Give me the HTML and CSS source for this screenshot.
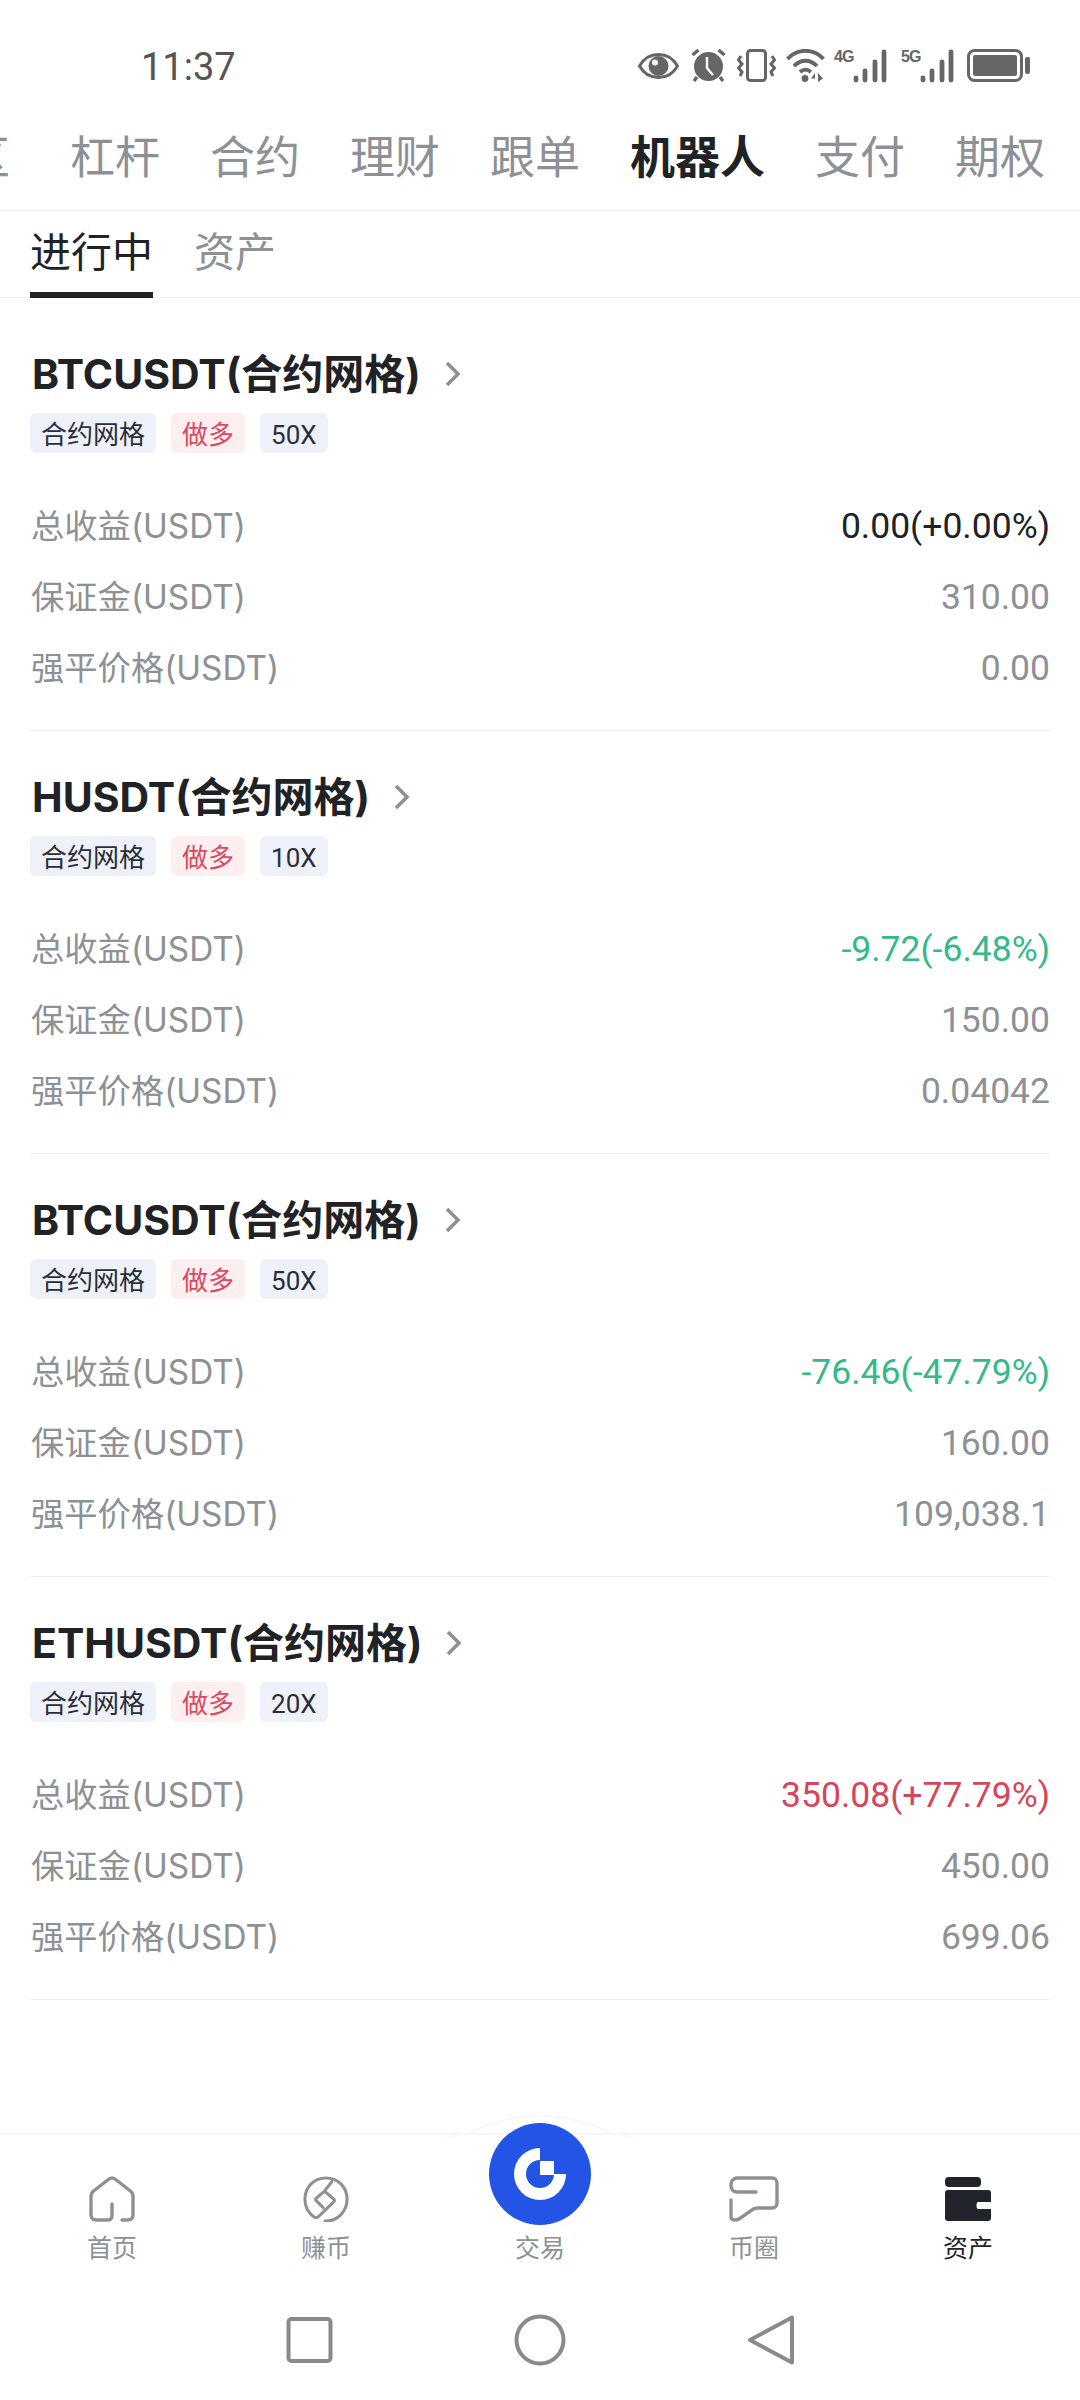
FILE: index.html
```html
<!DOCTYPE html>
<html lang="zh-CN">
<head>
    <meta charset="UTF-8">
    <meta name="viewport" content="width=device-width, initial-scale=1.0">
    <title>机器人</title>
    <link rel="stylesheet" href="styles.css">
</head>
<body>
    <svg class="defs" width="0" height="0">
        <symbol id="chevron" viewBox="0 0 18 28">
            <path d="M3 3l11 11L3 25" fill="none" stroke="#8d9196" stroke-width="3.6"/>
        </symbol>
        <symbol id="bars" viewBox="0 0 34 34">
            <g stroke="#666" stroke-width="4.800" stroke-linecap="round">
                <path d="M3 29v2M12 22v9M22 13v18M31 3v28"/>
            </g>
        </symbol>
    </svg>

    <div class="status">
        <span class="time">11:37</span>
        <div class="status_icons">
            <!-- eye -->
            <svg class="ic_eye" width="41" height="26" viewBox="0 0 41 26">
                <path d="M1.500 13C6 5 13 1.500 20.500 1.500S35 5 39.500 13C35 21 28 24.500 20.500 24.500S6 21 1.500 13z" fill="none" stroke="#666" stroke-width="3"/>
                <circle cx="20.500" cy="13" r="10" fill="#666"/>
                <circle cx="17" cy="9.500" r="3" fill="#fff"/>
            </svg>
            <!-- alarm -->
            <svg class="ic_alarm" width="35" height="33" viewBox="0 0 35 33">
                <circle cx="17.500" cy="17.500" r="14.500" fill="#666"/>
                <path d="M1.500 6l6-5M33.500 6l-6-5M6 28l-3 4M29 28l3 4" stroke="#666" stroke-width="3.400"/>
                <path d="M16 8v11l6 7" fill="none" stroke="#fff" stroke-width="2.400"/>
            </svg>
            <!-- vibrate -->
            <svg class="ic_vib" width="39" height="33" viewBox="0 0 39 33">
                <rect x="10.500" y="1.500" width="18" height="30" rx="3" fill="none" stroke="#666" stroke-width="3"/>
                <path d="M4 7L1.500 11 5 15 1.500 19 5 23 3 27M35 7l2.500 4-3.500 4 3.500 4-3.500 4 2 4" fill="none" stroke="#666" stroke-width="3"/>
            </svg>
            <!-- wifi -->
            <svg class="ic_wifi" width="39" height="33" viewBox="0 0 39 33">
                <path d="M1.500 10C11-1 28-1 37.500 10M8 17c7-7 16-7 23 0M14 23c3.500-3 7.500-3 11 0" fill="none" stroke="#666" stroke-width="3.800"/>
                <circle cx="19" cy="29.500" r="3.400" fill="#666"/>
                <path d="M29 24l-4 5.500h4zM32 33v-9l5 5.500z" fill="#666"/>
            </svg>
            <div class="net">
                <span class="net_label">4G</span>
                <svg width="34" height="34"><use href="#bars"/></svg>
            </div>
            <div class="net">
                <span class="net_label">5G</span>
                <svg width="34" height="34"><use href="#bars"/></svg>
            </div>
            <!-- battery -->
            <svg class="ic_batt" width="63" height="33" viewBox="0 0 63 33">
                <rect x="1.500" y="1.500" width="53" height="30" rx="6" fill="none" stroke="#666" stroke-width="3"/>
                <rect x="6" y="6" width="44" height="21" rx="2" fill="#666"/>
                <rect x="58" y="8" width="5" height="17" rx="2" fill="#666"/>
            </svg>
        </div>
    </div>

    <div class="tabs">
        <span class="tab tab_cut">区</span>
        <span class="tab tab_next">杠杆</span>
        <span class="tab">合约</span>
        <span class="tab">理财</span>
        <span class="tab">跟单</span>
        <span class="tab on">机器人</span>
        <span class="tab">支付</span>
        <span class="tab">期权</span>
    </div>

    <div class="subtabs">
        <span class="subtab on">进行中</span>
        <span class="subtab">资产</span>
    </div>

    <div class="list">
        <div class="card">
            <div class="card_title">BTCUSDT(合约网格)<svg class="chev"><use href="#chevron"/></svg></div>
            <div class="tags"><span class="tag">合约网格</span><span class="tag long">做多</span><span class="tag">50X</span></div>
            <div class="row"><span class="label">总收益(USDT)</span><span class="val dark">0.00(+0.00%)</span></div>
            <div class="row"><span class="label">保证金(USDT)</span><span class="val">310.00</span></div>
            <div class="row"><span class="label">强平价格(USDT)</span><span class="val">0.00</span></div>
        </div>
        <div class="card">
            <div class="card_title">HUSDT(合约网格)<svg class="chev"><use href="#chevron"/></svg></div>
            <div class="tags"><span class="tag">合约网格</span><span class="tag long">做多</span><span class="tag">10X</span></div>
            <div class="row"><span class="label">总收益(USDT)</span><span class="val green">-9.72(-6.48%)</span></div>
            <div class="row"><span class="label">保证金(USDT)</span><span class="val">150.00</span></div>
            <div class="row"><span class="label">强平价格(USDT)</span><span class="val">0.04042</span></div>
        </div>
        <div class="card">
            <div class="card_title">BTCUSDT(合约网格)<svg class="chev"><use href="#chevron"/></svg></div>
            <div class="tags"><span class="tag">合约网格</span><span class="tag long">做多</span><span class="tag">50X</span></div>
            <div class="row"><span class="label">总收益(USDT)</span><span class="val green">-76.46(-47.79%)</span></div>
            <div class="row"><span class="label">保证金(USDT)</span><span class="val">160.00</span></div>
            <div class="row"><span class="label">强平价格(USDT)</span><span class="val">109,038.1</span></div>
        </div>
        <div class="card">
            <div class="card_title">ETHUSDT(合约网格)<svg class="chev"><use href="#chevron"/></svg></div>
            <div class="tags"><span class="tag">合约网格</span><span class="tag long">做多</span><span class="tag">20X</span></div>
            <div class="row"><span class="label">总收益(USDT)</span><span class="val red">350.08(+77.79%)</span></div>
            <div class="row"><span class="label">保证金(USDT)</span><span class="val">450.00</span></div>
            <div class="row"><span class="label">强平价格(USDT)</span><span class="val">699.06</span></div>
        </div>
    </div>

    <div class="nav">
        <!-- faint bump behind the middle button -->
        <svg class="nav_bump" width="200" height="30" viewBox="0 0 200 30">
            <path d="M0 30c30 0 50-22 100-22s70 22 100 22" fill="none" stroke="#f9f9fa" stroke-width="2"/>
        </svg>
        <div class="nav_item">
            <svg class="nav_icon" width="46" height="46" viewBox="0 0 46 46">
                <path d="M23 28v11c0 3-1.500 5-4 5H7c-3 0-5-2-5-5V20c0-2 .5-3 2-4.500L20 3c2-1.500 4-1.500 6 0l16 12.500c1.500 1.500 2 2.500 2 4.500v19c0 3-2 5-5 5h-6" fill="none" stroke="#8d9196" stroke-width="3.400" stroke-linecap="round"/>
            </svg>
            <span>首页</span>
        </div>
        <div class="nav_item">
            <svg class="nav_icon" width="48" height="48" viewBox="0 0 48 48">
                <path d="M23 47c13 .5 23-10 23-23C46 11 36 2 24 2S2 11 2 24c0 8 4 15 10 19 2 1 3 .5 4-.5L32 27c1-1 1-2 0-3l-8-7c-1-1-2-1-3 0l-7 6c-1 1-1 2 0 3l7 7M23 15l7-9" fill="none" stroke="#8d9196" stroke-width="3.200" stroke-linecap="round"/>
            </svg>
            <span>赚币</span>
        </div>
        <div class="nav_item">
            <div class="trade_btn">
                <svg width="52" height="52" viewBox="0 0 52 52">
                    <path d="M26 0A26 26 0 1 0 52 26H40A14 14 0 1 1 26 12z" fill="#fff"/>
                    <rect x="26" y="13" width="14" height="14" fill="#fff"/>
                </svg>
            </div>
            <span class="trade_label">交易</span>
        </div>
        <div class="nav_item">
            <svg class="nav_icon" width="50" height="46" viewBox="0 0 50 46">
                <path d="M27 16H8c-3 0-6-2-6-6V8c0-3 3-6 6-6h35c3 0 5 2 5 5v20c0 3-2 5-5 5H28c-2 0-4 1-5 2L10 43c-3 2-8 1-8-2V24" fill="none" stroke="#8d9196" stroke-width="3.400" stroke-linecap="round"/>
            </svg>
            <span>币圈</span>
        </div>
        <div class="nav_item on">
            <svg class="nav_icon" width="46" height="46" viewBox="0 0 46 46">
                <rect y="1" width="36" height="10" rx="4" fill="#22242c"/>
                <path d="M3 14h40c2 0 3 1 3 3v9H33c-2 0-2 7 0 7h13v9c0 2-1 3-3 3H3c-2 0-3-1-3-3V17c0-2 1-3 3-3z" fill="#22242c"/>
            </svg>
            <span>资产</span>
        </div>
    </div>

    <div class="sysbar">
        <svg width="52" height="52" viewBox="0 0 52 52">
            <rect x="5.500" y="5" width="42" height="42" rx="3" fill="none" stroke="#8a8a8a" stroke-width="4"/>
        </svg>
        <svg width="52" height="52" viewBox="0 0 52 52">
            <circle cx="26" cy="26" r="23.500" fill="none" stroke="#8a8a8a" stroke-width="4"/>
        </svg>
        <svg width="52" height="52" viewBox="0 0 52 52">
            <path d="M47 3.500v45L5 26z" fill="none" stroke="#8a8a8a" stroke-width="4" stroke-linejoin="round"/>
        </svg>
    </div>
</body>
</html>
```

FILE: styles.css
```css
* {
    margin: 0;
    padding: 0;
    box-sizing: border-box;
}
body {
    width: 1080px;
    height: 2400px;
    background: #fff;
    color: #202226;
    font-family: Inter, "Noto Sans CJK SC", sans-serif;
    display: flex;
    flex-direction: column;
    overflow: hidden;
}
.defs {
    position: absolute;
}
svg {
    display: block;
    flex-shrink: 0;
}

/* status bar */
.status {
    height: 102px;
    padding: 32px 50px 0 141px;
    display: flex;
    justify-content: space-between;
    align-items: center;
}
.time {
    font-family: Roboto, sans-serif;
    font-size: 38px;
    color: #555;
}
.status_icons {
    display: flex;
    align-items: center;
    margin-top: -3px;
}
.ic_alarm {
    margin-left: 12px;
}
.ic_vib {
    margin-left: 11px;
}
.ic_wifi {
    margin-left: 10px;
}
.net {
    display: flex;
    align-items: flex-start;
    margin-left: 9px;
    height: 34px;
}
.net + .net {
    margin-left: 14px;
}
.net_label {
    font-family: "Liberation Sans", sans-serif;
    font-size: 16px;
    font-weight: 700;
    line-height: 16px;
    width: 19px;
    letter-spacing: -1px;
    color: #666;
}
.ic_batt {
    margin-left: 13px;
}

/* top tabs */
.tabs {
    height: 109px;
    padding-bottom: 3px;
    border-bottom: 1px solid #eeeff1;
    display: flex;
    align-items: center;
    gap: 50px;
    overflow: hidden;
}
.tab {
    font-size: 45px;
    color: #8d9196;
    white-space: nowrap;
    flex-shrink: 0;
}
.tab.on {
    color: #202226;
    font-weight: 700;
}
.tab_cut {
    margin-left: -35px;
}
.tab_next {
    margin-left: 10px;
}

/* sub tabs */
.subtabs {
    height: 87px;
    padding: 0 30px;
    border-bottom: 1px solid #eeeff1;
    display: flex;
    gap: 41px;
}
.subtab {
    height: 87px;
    padding-top: 13px;
    font-size: 41px;
    line-height: 56px;
    color: #8d9196;
}
.subtab.on {
    color: #202226;
    border-bottom: 6px solid #202226;
}

/* bot cards */
.list {
    flex: 1;
    padding: 10px 30px 0;
}
.card {
    height: 423px;
    padding-top: 39px;
    border-bottom: 1px solid #eeeff1;
}
.card_title {
    height: 54px;
    padding-left: 2px;
    font-size: 41px;
    font-weight: 700;
    line-height: 54px;
    display: flex;
    align-items: center;
}
.chev {
    width: 18px;
    height: 28px;
    margin-left: 23px;
}
.tags {
    margin-top: 12px;
    margin-bottom: 37px;
    display: flex;
    gap: 15px;
}
.tag {
    height: 40px;
    padding: 4px 11px 0;
    border-radius: 6px;
    background: #eff1f8;
    color: #2a2e3b;
    font-family: Roboto, "Noto Sans CJK SC", sans-serif;
    font-size: 26px;
    line-height: 36px;
}
.tag.long {
    background: #fdeff0;
    color: #dc4860;
}
.row {
    height: 71px;
    padding-left: 1px;
    display: flex;
    justify-content: space-between;
    align-items: center;
    color: #8d9196;
}
.label {
    font-size: 33.300px;
    padding-bottom: 4px;
}
.val {
    font-family: Roboto, sans-serif;
    font-size: 35.500px;
    color: #8d9196;
}
.val.dark {
    color: #202226;
}
.val.green {
    color: #35b98a;
}
.val.red {
    color: #d8445c;
}

/* bottom nav */
.nav {
    position: relative;
    height: 157px;
    padding: 41px 42px 0;
    border-top: 2px solid #f6f6f7;
    display: flex;
    gap: 74px;
}
.nav_bump {
    position: absolute;
    left: 440px;
    top: -27px;
}
.nav_item {
    width: 140px;
    display: flex;
    flex-direction: column;
    align-items: center;
    font-size: 25px;
    line-height: 30px;
    color: #8d9196;
}
.nav_item.on {
    color: #22242c;
}
.nav_icon {
    height: 46px;
    margin-bottom: 11px;
}
.trade_btn {
    position: absolute;
    left: 489px;
    top: -12px;
    width: 102px;
    height: 102px;
    border-radius: 50%;
    background: #2354e6;
    display: flex;
    align-items: center;
    justify-content: center;
}
.trade_label {
    margin-top: 57px;
}

/* android buttons */
.sysbar {
    height: 110px;
    padding-top: 24px;
    display: flex;
    justify-content: center;
    gap: 179px;
}
```
